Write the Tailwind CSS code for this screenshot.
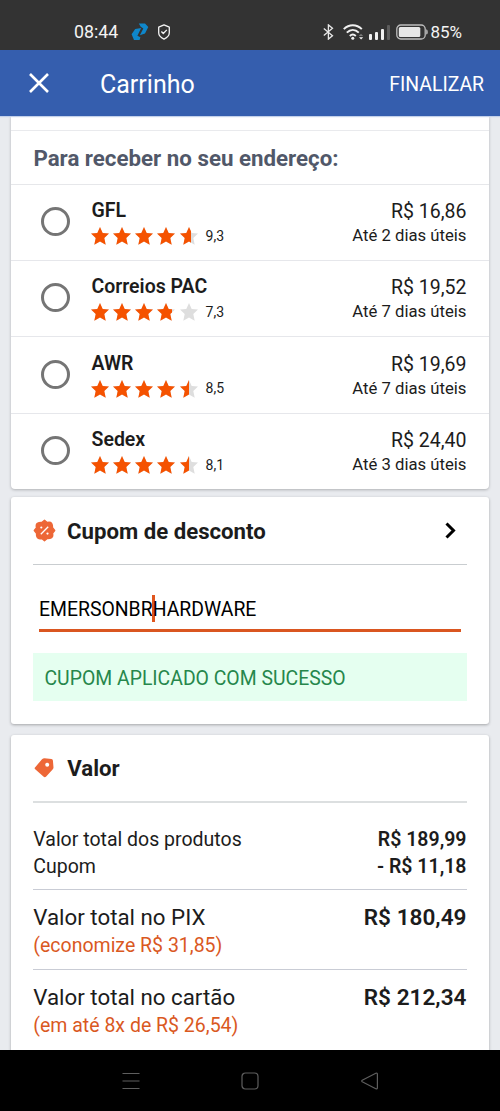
<!DOCTYPE html>
<html lang="pt-BR">
<head>
<meta charset="utf-8">
<title>Carrinho</title>
<script src="https://cdn.jsdelivr.net/npm/@tailwindcss/browser@4"></script>
</head>
<body class="bg-[#e9ebef] text-[#1c1c1c] font-[Roboto,sans-serif]">
<svg width="0" height="0" class="hidden">
  <symbol id="star" viewBox="0 0 18 18"><path d="M9 0l2.700 5.900 6.300.7-4.700 4.400 1.400 6.800L9 14.500l-5.700 3.300 1.400-6.800L0 6.600l6.300-.7z"/></symbol>
</svg>
<div class="flex h-[1111px] w-[500px] flex-col overflow-hidden">

  <!-- Status bar -->
  <div class="flex h-[50px] shrink-0 items-center bg-[#333333] pt-[14px] pl-[74px] pr-[38px] text-[#f4f4f4]">
    <span class="w-[57px] text-[17.800px] leading-[22px]">08:44</span>
    <svg class="h-[18px] w-[18px]" viewBox="0 0 18 18" fill="#0f87cb"><path d="M7.800.5H14L17.300 4 14 10.600 8.900 12.200 12.300 5.400 9.700 3.700z"/><path d="M.6 11.200L4.200 6 10.200 4.900 6.400 12.700 9.400 14.300 8.600 17H3z"/></svg>
    <svg class="ml-[8px] h-[16px] w-[14px]" viewBox="0 0 14 16" fill="none" stroke="#f4f4f4" stroke-width="1.300" stroke-linejoin="round"><path d="M7 .9l5.300 2.300v5.600c0 2.600-2.300 4.900-5.300 6.300-3-1.400-5.300-3.700-5.300-6.300V3.200z"/><path d="M4.400 7.500l1.900 2 3.500-3.600"/></svg>
    <div class="ml-auto flex items-center">
      <svg class="h-[16px] w-[11px]" viewBox="0 0 11 16" fill="none" stroke="#e8e8e8" stroke-width="1.300"><path d="M.8 4.500l8.700 7.200-4.100 3.400V.9l4.100 3.400-8.700 7.200"/></svg>
      <svg class="ml-[9px] h-[16px] w-[21px]" viewBox="0 0 21 16" fill="none" stroke="#f0f0f0" stroke-width="2"><path d="M.8 5.100c5.300-5.200 12.700-5.200 18 0M3.800 8.600c3.600-3.500 8.400-3.500 12 0M6.800 11.900c1.900-1.700 4.100-1.700 6 0"/><circle cx="9.800" cy="14.200" r="1.500" fill="#f0f0f0" stroke="none"/><path d="M15.800 12l2.200-2.300 2.200 2.300z" fill="#777" stroke="none"/><path d="M16 13.300l2.100 2.300 2.100-2.300z" fill="#f0f0f0" stroke="none"/></svg>
      <div class="ml-[5px] flex h-[16px] items-end gap-[3px]"><i class="h-[6px] w-[3px] rounded-[1px] bg-[#f0f0f0]"></i><i class="h-[8px] w-[3px] rounded-[1px] bg-[#f0f0f0]"></i><i class="h-[11px] w-[3px] rounded-[1px] bg-[#f0f0f0]"></i><i class="h-[15px] w-[3px] rounded-[1px] bg-[#5c5c5c]"></i></div>
      <svg class="ml-[6px] h-[16px] w-[32px]" viewBox="0 0 32 16"><rect x=".8" y="1" width="28.400" height="14" rx="4" fill="none" stroke="#bdbdbd" stroke-width="1.300"/><rect x="2.800" y="3" width="21.500" height="10" rx="1.500" fill="#e6e6e6"/><path d="M30.200 5.200q1.600 0 1.600 2.700t-1.600 2.700z" fill="#bdbdbd"/></svg>
      <span class="ml-[2.500px] text-[17px] leading-[22px]">85%</span>
    </div>
  </div>

  <!-- App bar -->
  <header class="z-10 flex h-[66px] shrink-0 items-center bg-[#355eae] pl-[29px] pr-[16px] text-white shadow-[0_1px_1px_#c3d1ea]">
    <svg class="h-[20px] w-[20px]" viewBox="0 0 20 20" stroke="#fff" stroke-width="2.600"><path d="M1 1l18 18M19 1L1 19"/></svg>
    <h1 class="ml-[51px] pt-[3px] text-[25px] leading-[30px]">Carrinho</h1>
    <span class="ml-auto pt-[3px] text-[19.400px] leading-[24px]">FINALIZAR</span>
  </header>

  <main class="flex min-h-0 flex-1 flex-col overflow-hidden px-[11px]">
    <!-- Shipping options -->
    <section class="h-[373px] shrink-0 rounded-b-[4px] bg-white shadow-[0_1px_3px_rgba(0,0,0,0.25)]">
      <div class="h-[15px] border-b border-[#e9eaed]"></div>
      <h2 class="h-[53.500px] border-b border-[#e6e7ea] pt-[14px] pl-[22.400px] text-[22.300px] leading-[27px] font-bold text-[#515869]">Para receber no seu endereço:</h2>
      <div id="options"></div>
    </section>

    <!-- Coupon -->
    <section class="mt-[8px] h-[226.500px] shrink-0 rounded-[3px] bg-white px-[22px] shadow-[0_1px_3px_rgba(0,0,0,0.3)]">
      <div class="flex h-[68px] items-center border-b border-[#c9cdd0]">
        <svg class="h-[23px] w-[23px]" viewBox="0 0 23 23"><path d="M11.500 1.300L14.200 3.500Q17.500 2.700 18.600 4.400T19.500 8.800L21.700 11.500 19.500 14.200Q20.300 17.500 18.600 18.600T14.200 19.500L11.500 21.700 8.800 19.500Q5.500 20.300 4.400 18.600T3.500 14.200L1.300 11.500 3.500 8.800Q2.700 5.500 4.400 4.400T8.800 3.500z" fill="#ed6737" stroke="#ed6737" stroke-width="1.400" stroke-linejoin="round"/><path d="M7.800 15.200l7.400-7.400" stroke="#fff" stroke-width="1.300"/><circle cx="8.300" cy="8.500" r="1.100" fill="#fff"/><circle cx="14.500" cy="14.600" r="1.100" fill="#fff"/></svg>
        <h2 class="ml-[11px] pt-px text-[22.200px] leading-[27px] font-bold">Cupom de desconto</h2>
        <svg class="mr-[11px] ml-auto h-[17px] w-[11px]" viewBox="0 0 11 17" fill="none" stroke="#000" stroke-width="3"><path d="M1.500 1.500l7 7-7 7"/></svg>
      </div>
      <div class="mx-[6px] flex h-[67px] items-end border-b-[3px] border-[#da5620] pb-[6.500px] text-[19.400px] leading-[26px] text-black"><span>EMERSONBR</span><i class="mb-px -mr-[2.500px] -ml-[0.500px] h-[27px] w-[3px] bg-[#e0561e]"></i><span>HARDWARE</span></div>
      <div class="mt-[21px] h-[48px] bg-[#e5fff0] pt-[14px] pl-[11.500px] text-[19.400px] leading-[24px] text-[#26874c]">CUPOM APLICADO COM SUCESSO</div>
    </section>

    <!-- Totals -->
    <section class="mt-[11.500px] h-[340px] shrink-0 bg-white pl-[22.300px] pr-[22.500px] rounded-t-[3px] shadow-[0_1px_3px_rgba(0,0,0,0.3)]">
      <div class="flex h-[67.500px] items-center border-b-2 border-[#dcdfe0]">
        <svg class="h-[20px] w-[23px]" viewBox="0 0 23 20"><path d="M2.200 9.300L9 1.200Q10 .2 11.500.2l7 .7q1.300.2 1.400 1.500l.6 7q.1 1.200-.9 2.200l-6.400 6.900q-1.400 1.400-2.800 0L2.200 11.300q-1.200-1 0-2z" fill="#ed6737"/><circle cx="14.200" cy="6.800" r="2" fill="#fff"/></svg>
        <h2 class="ml-[11px] pt-px text-[22.200px] leading-[27px] font-bold">Valor</h2>
      </div>
      <div class="h-[87.500px] border-b border-[#c9ccd5] pt-[24.500px] text-[19.500px] leading-[26.500px]">
        <div class="flex justify-between"><span>Valor total dos produtos</span><b class="font-semibold">R$ 189,99</b></div>
        <div class="flex justify-between"><span>Cupom</span><b class="font-semibold">- R$ 11,18</b></div>
      </div>
      <div class="h-[80px] border-b border-[#c9ccd5] pt-[13px] text-[22.300px] leading-[29px]">
        <div class="flex justify-between"><span>Valor total no PIX</span><b class="text-[22.600px] font-semibold">R$ 180,49</b></div>
        <div class="text-[19.500px] leading-[27px] text-[#da591f]">(economize R$ 31,85)</div>
      </div>
      <div class="pt-[13px] text-[22.300px] leading-[29px]">
        <div class="flex justify-between"><span>Valor total no cartão</span><b class="text-[22.600px] font-semibold">R$ 212,34</b></div>
        <div class="text-[19.500px] leading-[27px] text-[#da591f]">(em até 8x de R$ 26,54)</div>
      </div>
    </section>
  </main>

  <!-- System navigation -->
  <nav class="z-10 flex h-[61px] shrink-0 items-center justify-between bg-black px-[121.500px]">
    <svg class="h-[18px] w-[18px]" viewBox="0 0 18 18" stroke="#5e5e5e" stroke-width="1.200"><path d="M.5 1.500h17M.5 9h17M.5 16.500h17"/></svg>
    <svg class="h-[18px] w-[18px]" viewBox="0 0 18 18" fill="none" stroke="#5e5e5e" stroke-width="1.200"><rect x="1" y="1" width="16" height="16" rx="3.500"/></svg>
    <svg class="h-[18px] w-[18px]" viewBox="0 0 18 18" fill="none" stroke="#5e5e5e" stroke-width="1.200" stroke-linejoin="round"><path d="M1.200 8.200L14.800 1.200q1.600-.5 1.600 1v13.600q0 1.500-1.600 1L1.200 9.800q-.9-.8 0-1.600z"/></svg>
  </nav>
</div>

<script>
// fill: width in pixels of the coloured part of the star row
const options = [
  { name: 'GFL', score: '9,3', fill: 100.3, price: 'R$ 16,86', days: 2 },
  { name: 'Correios PAC', score: '7,3', fill: 81.5, price: 'R$ 19,52', days: 7 },
  { name: 'AWR', score: '8,5', fill: 97.8, price: 'R$ 19,69', days: 7 },
  { name: 'Sedex', score: '8,1', fill: 97.8, price: 'R$ 24,40', days: 3 },
];
const stars = c => `<div class="flex w-[107px] gap-[4.200px] ${c}">` + '<svg class="h-[18px] w-[18px] shrink-0" fill="currentColor"><use href="#star"/></svg>'.repeat(5) + '</div>';
document.getElementById('options').innerHTML = options.map((o, i) => `
  <div class="flex h-[76.400px] ${i < 3 ? 'border-b border-[#e6e7eb]' : ''} pl-[30px] pr-[22.500px]">
    <div class="mt-[22.500px] h-[29px] w-[29px] shrink-0 rounded-full border-[3px] border-[#757575]"></div>
    <div class="ml-[20.800px] pt-[14.500px]">
      <div class="pl-[0.700px] text-[19.500px] leading-[24px] font-semibold">${o.name}</div>
      <div class="mt-[4px] flex h-[18px] items-center">
        <div class="relative">${stars('text-[#dedede]')}<div class="absolute inset-y-0 left-0 overflow-hidden" style="width:${o.fill}px">${stars('text-[#f55200]')}</div></div>
        <span class="ml-[7.800px] -mt-px text-[14px] leading-[16px]">${o.score}</span>
      </div>
    </div>
    <div class="ml-auto pt-[15.500px] text-right">
      <div class="text-[19.500px] leading-[24px]">${o.price}</div>
      <div class="mt-px text-[16.700px] leading-[22px]">Até ${o.days} dias úteis</div>
    </div>
  </div>`).join('');
</script>
</body>
</html>
